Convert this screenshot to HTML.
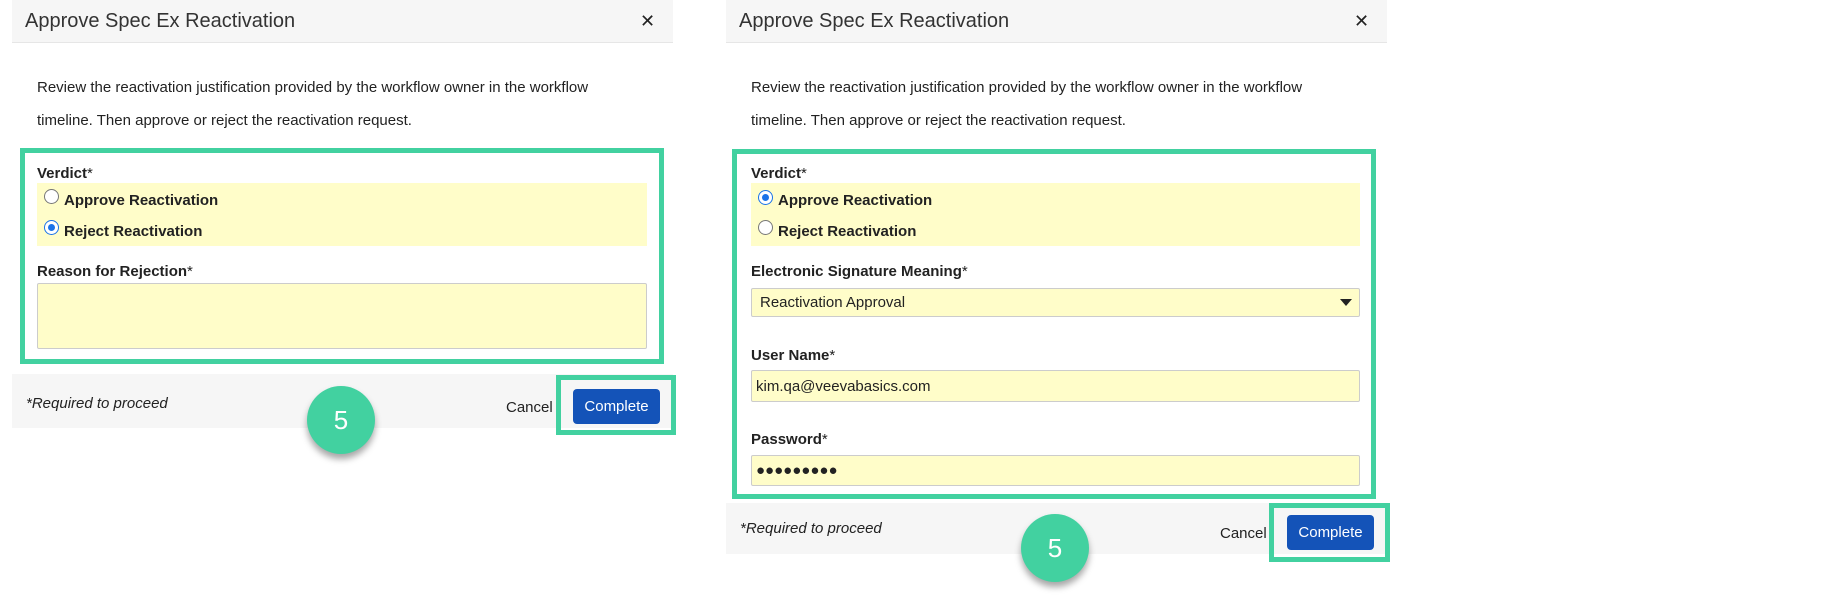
<!DOCTYPE html>
<html><head><meta charset="utf-8"><style>
*{box-sizing:border-box;margin:0;padding:0}
body{width:1825px;height:610px;background:#fff;font-family:"Liberation Sans",Arial,sans-serif;color:#222;position:relative;overflow:hidden}
.a{position:absolute}
.hdr{background:#f6f6f6;border-bottom:1px solid #e6e6e6;height:43px}
.title{font-size:20px;color:#333}
.x{font-size:18px;color:#222}
.p{font-size:15px;color:#222}
.lbl{font-size:15px;font-weight:bold;color:#222}
.lbl span{font-weight:normal}
.yel{background:#fffdc9}
.gb{border:5px solid #42d1a0}
.radio{width:15px;height:15px;border-radius:50%;border:1px solid #777;background:#fff}
.radio.on{border:1.5px solid #1a73e8;}
.radio.on::after{content:"";position:absolute;left:2.5px;top:2.5px;width:7px;height:7px;border-radius:50%;background:#1a73e8}
.inp{background:#fffdc9;border:1px solid #ccc;border-radius:2px;font-size:15px;padding-left:8px;display:flex;align-items:center}
.foot{background:#f6f6f6}
.btn{background:#1453b8;color:#fff;border-radius:4px;font-size:15px;display:flex;align-items:center;justify-content:center}
.circ{width:68px;height:68px;border-radius:50%;background:#42d1a0;color:#fff;font-size:26px;display:flex;align-items:center;justify-content:center;box-shadow:0 5px 7px rgba(0,0,0,.35)}
</style></head><body>

<!-- LEFT -->
<div class="a hdr" style="left:12px;top:0;width:661px"></div>
<div class="a title" style="left:25px;top:10px">Approve Spec Ex Reactivation</div>
<div class="a x" style="left:640px;top:11px">✕</div>
<div class="a p" style="left:37px;top:79px">Review the reactivation justification provided by the workflow owner in the workflow</div>
<div class="a p" style="left:37px;top:112px">timeline. Then approve or reject the reactivation request.</div>
<div class="a gb" style="left:20px;top:148px;width:644px;height:216px"></div>
<div class="a lbl" style="left:37px;top:165px">Verdict<span>*</span></div>
<div class="a yel" style="left:37px;top:183px;width:610px;height:63px"></div>
<div class="a radio" style="left:44px;top:189px"></div>
<div class="a lbl" style="left:64px;top:192px">Approve Reactivation</div>
<div class="a radio on" style="left:44px;top:220px"></div>
<div class="a lbl" style="left:64px;top:223px">Reject Reactivation</div>
<div class="a lbl" style="left:37px;top:263px">Reason for Rejection<span>*</span></div>
<div class="a inp" style="left:37px;top:283px;width:610px;height:66px"></div>
<div class="a foot" style="left:12px;top:374px;width:661px;height:54px"></div>
<div class="a p" style="left:26px;top:395px;font-style:italic">*Required to proceed</div>
<div class="a p" style="left:506px;top:399px">Cancel</div>
<div class="a gb" style="left:556px;top:375px;width:120px;height:60px"></div>
<div class="a btn" style="left:573px;top:389px;width:87px;height:35px">Complete</div>
<div class="a circ" style="left:307px;top:386px">5</div>

<!-- RIGHT -->
<div class="a hdr" style="left:726px;top:0;width:661px"></div>
<div class="a title" style="left:739px;top:10px">Approve Spec Ex Reactivation</div>
<div class="a x" style="left:1354px;top:11px">✕</div>
<div class="a p" style="left:751px;top:79px">Review the reactivation justification provided by the workflow owner in the workflow</div>
<div class="a p" style="left:751px;top:112px">timeline. Then approve or reject the reactivation request.</div>
<div class="a gb" style="left:732px;top:149px;width:644px;height:350px"></div>
<div class="a lbl" style="left:751px;top:165px">Verdict<span>*</span></div>
<div class="a yel" style="left:751px;top:183px;width:609px;height:63px"></div>
<div class="a radio on" style="left:758px;top:190px"></div>
<div class="a lbl" style="left:778px;top:192px">Approve Reactivation</div>
<div class="a radio" style="left:758px;top:220px"></div>
<div class="a lbl" style="left:778px;top:223px">Reject Reactivation</div>
<div class="a lbl" style="left:751px;top:263px">Electronic Signature Meaning<span>*</span></div>
<div class="a inp" style="left:751px;top:288px;width:609px;height:29px">Reactivation Approval</div>
<div class="a" style="left:1340px;top:299px;width:0;height:0;border-left:6px solid transparent;border-right:6px solid transparent;border-top:7px solid #222"></div>
<div class="a lbl" style="left:751px;top:347px">User Name<span>*</span></div>
<div class="a inp" style="left:751px;top:370px;width:609px;height:32px;padding-left:4px">kim.qa@veevabasics.com</div>
<div class="a lbl" style="left:751px;top:431px">Password<span>*</span></div>
<div class="a inp" style="left:751px;top:455px;width:609px;height:31px;padding-left:4px;font-size:15px;letter-spacing:0px">●●●●●●●●●</div>
<div class="a foot" style="left:726px;top:503px;width:661px;height:51px"></div>
<div class="a p" style="left:740px;top:520px;font-style:italic">*Required to proceed</div>
<div class="a p" style="left:1220px;top:525px">Cancel</div>
<div class="a gb" style="left:1269px;top:503px;width:121px;height:59px"></div>
<div class="a btn" style="left:1287px;top:515px;width:87px;height:35px">Complete</div>
<div class="a circ" style="left:1021px;top:514px">5</div>

</body></html>
